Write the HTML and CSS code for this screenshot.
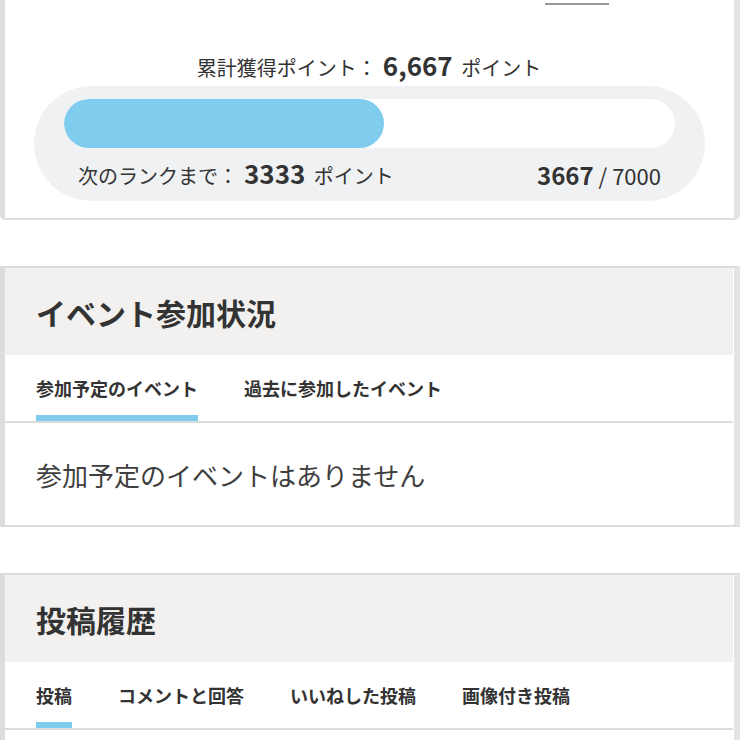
FILE: index.html
```html
<!DOCTYPE html>
<html lang="ja">
<head>
<meta charset="utf-8">
<title>マイページ</title>
<link rel="stylesheet" href="styles.css">
</head>
<body>
<main class="page">
  <section class="card card-rank">
    <h2 class="rank-title">現在のランク：<span class="rank-name">ゴールド</span><span class="rank-link">　　</span></h2>
    <p class="total">累計獲得ポイント：<b class="num-lg">6,667</b> ポイント</p>
    <div class="meter">
      <div class="track"><div class="fill" style="width:52.45%"></div></div>
      <div class="meter-row">
        <span class="next">次のランクまで：<b class="num-lg">3333</b> ポイント</span>
        <span class="ratio"><b class="num-md">3667</b> / 7000</span>
      </div>
    </div>
  </section>

  <section class="card">
    <h2 class="card-head">イベント参加状況</h2>
    <nav class="tabs">
      <span class="tab active">参加予定のイベント</span>
      <span class="tab">過去に参加したイベント</span>
    </nav>
    <p class="empty">参加予定のイベントはありません</p>
  </section>

  <section class="card">
    <h2 class="card-head">投稿履歴</h2>
    <nav class="tabs">
      <span class="tab active">投稿</span>
      <span class="tab">コメントと回答</span>
      <span class="tab">いいねした投稿</span>
      <span class="tab">画像付き投稿</span>
    </nav>
    <div class="list"></div>
  </section>
</main>
</body>
</html>
```

FILE: styles.css
```css
* { box-sizing: border-box; }

html, body {
  margin: 0;
  padding: 0;
  background: #ffffff;
}

body {
  font-family: "Noto Sans CJK JP", "Noto Sans", sans-serif;
  color: #333333;
}

.page {
  display: flex;
  flex-direction: column;
  gap: 46px;
}

.card {
  background: #ffffff;
  border-top: 2px solid #dcdcdc;
  border-bottom: 2px solid #dcdcdc;
  border-left: 5px solid #dcdddf;
  border-right: 6px solid #e4e4e4;
  padding-right: 1px;
}

.card-rank {
  margin-top: -50px;
  padding-bottom: 17px;
  border-radius: 0 0 5px 5px;
}

.rank-title {
  margin: 0;
  height: 56px;
  line-height: 56px;
  font-size: 32px;
  font-weight: 700;
  text-align: center;
  color: #333333;
}

.rank-link {
  border-bottom: 2px solid #999999;
}

.total {
  margin: 39px 0 3px;
  height: 36px;
  line-height: 36px;
  font-size: 20px;
  text-align: center;
  color: #333333;
}

.num-lg {
  font-size: 26px;
  font-weight: 700;
  margin: 0 4px 0 6px;
}

.num-md {
  font-size: 24px;
  font-weight: 700;
}

.meter {
  margin: 0 28px 0 29px;
  height: 115px;
  padding: 13px 30px 0;
  background: #f0f1f3;
  border-radius: 58px;
}

.track {
  height: 49px;
  background: #ffffff;
  border-radius: 25px;
  overflow: hidden;
}

.fill {
  height: 100%;
  background: #80ccee;
  border-radius: 25px;
}

.meter-row {
  height: 53px;
  padding: 0 14px;
  display: flex;
  align-items: center;
  justify-content: space-between;
  font-size: 20px;
  line-height: 30px;
}

.ratio {
  font-size: 22px;
}

.card-head {
  margin: 0;
  height: 87px;
  display: flex;
  align-items: center;
  padding-left: 31px;
  background: #f2f1ef;
  font-size: 30px;
  font-weight: 700;
  color: #333333;
}

.tabs {
  display: flex;
  gap: 46px;
  padding-left: 31px;
  border-bottom: 2px solid #dcdcdc;
}

.tab {
  height: 66px;
  padding-top: 19px;
  line-height: 28px;
  font-size: 18px;
  font-weight: 700;
  color: #333333;
  border-bottom: 6px solid transparent;
}

.tab.active {
  border-bottom-color: #80ccee;
}

.empty {
  margin: 0;
  height: 102px;
  padding: 34px 0 0 31px;
  line-height: 36px;
  font-size: 26px;
  color: #3f3f3f;
}

.list {
  height: 102px;
}
```
